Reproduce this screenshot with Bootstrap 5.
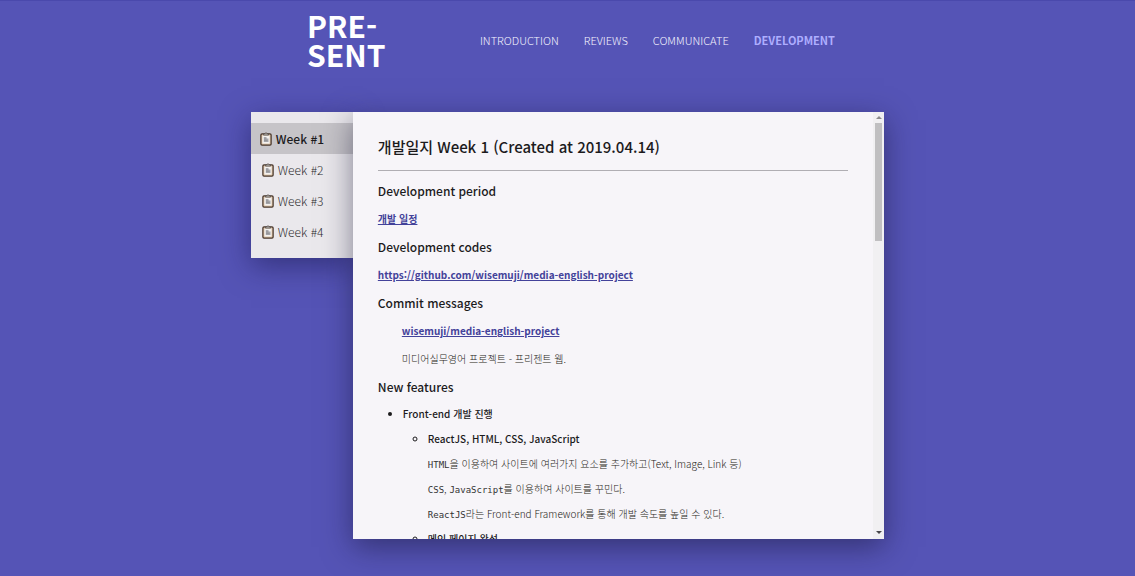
<!DOCTYPE html>
<html lang="ko">
<head>
<meta charset="utf-8">
<meta name="viewport" content="width=device-width, initial-scale=1">
<title>PRE-SENT | Development</title>
<link href="https://cdn.jsdelivr.net/npm/bootstrap@5.3.0/dist/css/bootstrap.min.css" rel="stylesheet">
<style>
  body {
    background: #5554b6;
    color: #1c1b1d;
    font-family: "Noto Sans CJK KR", sans-serif;
    font-size: 10px;
    min-height: 100vh;
    border-top: 1px solid #4a49ac;
  }
  .site-head { width: 46.6%; min-width: 527px; height: 81px; padding: 0 0 4px 4px; }
  .brand { font-size: 30px; line-height: 29px; font-weight: 700; color: #fff; }
  .menu { gap: 25px; font-size: 11px; line-height: 20px; margin-right: -3px; }
  .menu .nav-link { color: #f6f5ff; font-weight: 300; }
  .menu .nav-link.active { color: #aeaeff; font-weight: 700; }
  .journal { width: 55.8%; min-width: 633px; margin-top: 30px; }
  .weeks {
    width: 102px;
    padding: 11px 0;
    background: #eae8ec;
    box-shadow: 0 8px 28px rgba(20, 18, 70, .5);
    font-size: 12px;
    line-height: 31px;
  }
  .weeks .nav-link { color: #2c2b2e; font-weight: 300; padding: 0 0 0 11px; gap: 4px; }
  .weeks .nav-link.active {
    color: #1c1b1d;
    font-weight: 500;
    padding-left: 9px;
    background: #c6c4c8;
  }
  .sheet {
    height: 74.2vh;
    min-width: 0;
    background: #f7f5f9;
    box-shadow: 0 8px 28px rgba(20, 18, 50, .5);
  }
  .doc { padding: 23px 25px 0; min-width: 0; }
  .doc h1 { font-size: 15px; line-height: 24px; font-weight: 500; margin: 0 0 11px; }
  .doc hr { margin: 0 0 6px; border-color: #b0aeb3; opacity: 1; }
  .doc h2 { font-size: 12px; line-height: 28px; font-weight: 500; margin: 0; }
  .doc p { line-height: 28px; margin: 0; color: #1f1e20; font-weight: 300; }
  .doc a { color: #43429a; font-weight: 700; }
  .doc ul { padding-left: 25px; margin: 0; line-height: 25px; font-weight: 500; }
  .doc li p { line-height: 25px; }
  .doc code { font-family: "DejaVu Sans Mono", monospace; font-size: 9px; line-height: 1; color: #333; }
  .scroller { width: 11px; padding: 4px 2px; background: #f1f0f2; }
  .scroll-thumb { height: 118px; margin-top: 3px; background: #c0bfc1; }
</style>
</head>
<body>
<header class="site-head mx-auto d-flex align-items-center justify-content-between">
  <a class="brand text-decoration-none" href="#">PRE-<br>SENT</a>
  <nav class="menu nav flex-nowrap">
    <a class="nav-link p-0" href="#">INTRODUCTION</a>
    <a class="nav-link p-0" href="#">REVIEWS</a>
    <a class="nav-link p-0" href="#">COMMUNICATE</a>
    <a class="nav-link p-0 active" aria-current="page" href="#">DEVELOPMENT</a>
  </nav>
</header>

<svg class="d-none" xmlns="http://www.w3.org/2000/svg">
  <symbol id="clipboard" viewBox="0 0 12 14">
    <rect x="1" y="2" width="10" height="11" rx="1" fill="#f3f1ef" stroke="#49372b" stroke-width="1.5"/>
    <rect x="2" y="3" width="8" height="9" fill="none" stroke="#d9b58d" stroke-width=".6"/>
    <path d="M3.500 3.200V1.800H5L6 .5l1 1.300h1.500v1.400z" fill="#aaa6a4" stroke="#49413b" stroke-width=".6"/>
    <path d="M3.800 5h2.700v1.500h2V10H3.800z" fill="#a9a9ad"/>
    <path d="M4 7h2.500M4 8.700h3.500" stroke="#88888c" stroke-width=".7"/>
  </symbol>
</svg>

<main class="journal mx-auto d-flex align-items-start">
  <nav class="weeks nav flex-column flex-shrink-0" aria-label="Weeks">
    <a class="nav-link d-flex align-items-center active" href="#"><svg width="12" height="14" aria-hidden="true"><use href="#clipboard"/></svg>Week #1</a>
    <a class="nav-link d-flex align-items-center" href="#"><svg width="12" height="14" aria-hidden="true"><use href="#clipboard"/></svg>Week #2</a>
    <a class="nav-link d-flex align-items-center" href="#"><svg width="12" height="14" aria-hidden="true"><use href="#clipboard"/></svg>Week #3</a>
    <a class="nav-link d-flex align-items-center" href="#"><svg width="12" height="14" aria-hidden="true"><use href="#clipboard"/></svg>Week #4</a>
  </nav>
  <section class="sheet d-flex flex-grow-1 overflow-hidden position-relative">
    <article class="doc flex-grow-1">
      <h1>개발일지 Week 1 (Created at 2019.04.14)</h1>
      <hr>
      <h2>Development period</h2>
      <p><a href="#">개발 일정</a></p>
      <h2>Development codes</h2>
      <p><a href="#">https://github.com/wisemuji/media-english-project</a></p>
      <h2>Commit messages</h2>
      <div class="ps-4">
        <p><a href="#">wisemuji/media-english-project</a></p>
        <p>미디어실무영어 프로젝트 - 프리젠트 웹.</p>
      </div>
      <h2>New features</h2>
      <ul>
        <li>Front-end 개발 진행
          <ul>
            <li>ReactJS, HTML, CSS, JavaScript
              <p><code>HTML</code>을 이용하여 사이트에 여러가지 요소를 추가하고(Text, Image, Link 등)</p>
              <p><code>CSS</code>, <code>JavaScript</code>를 이용하여 사이트를 꾸민다.</p>
              <p><code>ReactJS</code>라는 Front-end Framework를 통해 개발 속도를 높일 수 있다.</p>
            </li>
            <li>메인 페이지 완성</li>
          </ul>
        </li>
      </ul>
    </article>
    <div class="scroller d-flex flex-column align-items-center flex-shrink-0" aria-hidden="true">
      <svg width="6" height="4"><path d="M3 0l3 3H0z" fill="#8b8a8c"/></svg>
      <div class="scroll-thumb w-100"></div>
      <svg class="mt-auto" width="6" height="4"><path d="M0 0h6L3 3z" fill="#48474a"/></svg>
    </div>
  </section>
</main>
<script src="https://cdn.jsdelivr.net/npm/bootstrap@5.3.0/dist/js/bootstrap.bundle.min.js"></script>
</body>
</html>
